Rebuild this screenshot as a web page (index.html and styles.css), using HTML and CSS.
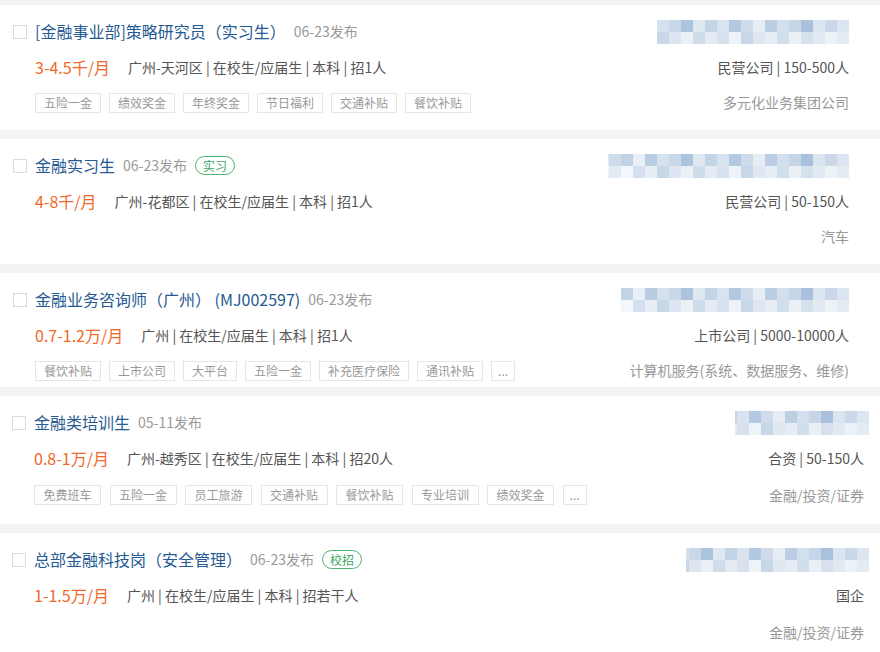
FILE: index.html
```html
<!DOCTYPE html>
<html lang="zh-CN">
<head>
    <meta charset="UTF-8">
    <meta name="viewport" content="width=device-width, initial-scale=1.0">
    <title>职位列表</title>
    <link rel="stylesheet" href="styles.css">
</head>
<body>
    <div class="job-list">
        <div class="job">
            <span class="job__check"></span>
            <div class="job__main">
                <div class="job__head">
                    <a class="job__title" href="#">[金融事业部]策略研究员（实习生）</a>
                    <span class="job__date">06-23发布</span>
                </div>
                <div class="job__info">
                    <span class="job__salary">3-4.5千/月</span>
                    <span class="job__meta">广州-天河区 | 在校生/应届生 | 本科 | 招1人</span>
                </div>
                <div class="job__tags">
                    <span class="tag">五险一金</span>
                    <span class="tag">绩效奖金</span>
                    <span class="tag">年终奖金</span>
                    <span class="tag">节日福利</span>
                    <span class="tag">交通补贴</span>
                    <span class="tag">餐饮补贴</span>
                </div>
            </div>
            <div class="job__side">
                <div class="blur blur--w192"></div>
                <div class="job__type">民营公司 | 150-500人</div>
                <div class="job__industry">多元化业务集团公司</div>
            </div>
        </div>

        <div class="job">
            <span class="job__check"></span>
            <div class="job__main">
                <div class="job__head">
                    <a class="job__title" href="#">金融实习生</a>
                    <span class="job__date">06-23发布</span>
                    <span class="badge">实习</span>
                </div>
                <div class="job__info">
                    <span class="job__salary">4-8千/月</span>
                    <span class="job__meta">广州-花都区 | 在校生/应届生 | 本科 | 招1人</span>
                </div>
            </div>
            <div class="job__side">
                <div class="blur blur--w241"></div>
                <div class="job__type">民营公司 | 50-150人</div>
                <div class="job__industry">汽车</div>
            </div>
        </div>

        <div class="job job--short">
            <span class="job__check"></span>
            <div class="job__main">
                <div class="job__head">
                    <a class="job__title" href="#">金融业务咨询师（广州） (MJ002597)</a>
                    <span class="job__date">06-23发布</span>
                </div>
                <div class="job__info">
                    <span class="job__salary">0.7-1.2万/月</span>
                    <span class="job__meta">广州 | 在校生/应届生 | 本科 | 招1人</span>
                </div>
                <div class="job__tags">
                    <span class="tag">餐饮补贴</span>
                    <span class="tag">上市公司</span>
                    <span class="tag">大平台</span>
                    <span class="tag">五险一金</span>
                    <span class="tag">补充医疗保险</span>
                    <span class="tag">通讯补贴</span>
                    <span class="tag tag--more">...</span>
                </div>
            </div>
            <div class="job__side">
                <div class="blur blur--w228"></div>
                <div class="job__type">上市公司 | 5000-10000人</div>
                <div class="job__industry">计算机服务(系统、数据服务、维修)</div>
            </div>
        </div>

        <div class="job job--wide">
            <span class="job__check"></span>
            <div class="job__main">
                <div class="job__head">
                    <a class="job__title" href="#">金融类培训生</a>
                    <span class="job__date">05-11发布</span>
                </div>
                <div class="job__info">
                    <span class="job__salary">0.8-1万/月</span>
                    <span class="job__meta">广州-越秀区 | 在校生/应届生 | 本科 | 招20人</span>
                </div>
                <div class="job__tags">
                    <span class="tag">免费班车</span>
                    <span class="tag">五险一金</span>
                    <span class="tag">员工旅游</span>
                    <span class="tag">交通补贴</span>
                    <span class="tag">餐饮补贴</span>
                    <span class="tag">专业培训</span>
                    <span class="tag">绩效奖金</span>
                    <span class="tag tag--more">...</span>
                </div>
            </div>
            <div class="job__side">
                <div class="blur blur--w134"></div>
                <div class="job__type">合资 | 50-150人</div>
                <div class="job__industry">金融/投资/证券</div>
            </div>
        </div>

        <div class="job job--wide">
            <span class="job__check"></span>
            <div class="job__main">
                <div class="job__head">
                    <a class="job__title" href="#">总部金融科技岗（安全管理）</a>
                    <span class="job__date">06-23发布</span>
                    <span class="badge">校招</span>
                </div>
                <div class="job__info">
                    <span class="job__salary">1-1.5万/月</span>
                    <span class="job__meta">广州 | 在校生/应届生 | 本科 | 招若干人</span>
                </div>
            </div>
            <div class="job__side">
                <div class="blur blur--w183"></div>
                <div class="job__type">国企</div>
                <div class="job__industry">金融/投资/证券</div>
            </div>
        </div>
    </div>
</body>
</html>
```

FILE: styles.css
```css
body {
    margin: 0;
    background-color: #f3f3f3;
    font-family: "Noto Sans CJK SC", "Liberation Sans", sans-serif;
}

.job-list {
    padding-top: 5px;
}

.job {
    display: flex;
    box-sizing: border-box;
    height: 125px;
    padding: 14px 31px 0 13px;
    background-color: #fff;
}

.job + .job {
    margin-top: 9px;
}

.job--short {
    height: 114px;
}

.job--wide {
    height: 128px;
    padding: 14px 16px 0 12px;
}

.job--wide .job__tags,
.job--wide .job__industry {
    margin-top: 15px;
}

.job--wide .job__tags {
    gap: 8.5px;
}

.job--wide .tag {
    padding: 0 8.5px;
}

.job--wide .tag--more {
    padding: 0 6px;
}

.job--wide .blur {
    margin-right: -5px;
}

.job__check {
    flex: none;
    width: 14px;
    height: 14px;
    box-sizing: border-box;
    margin: 6px 8px 0 0;
    border: 1px solid #dcdcdc;
    background-color: #fff;
}

.job__main {
    flex: 1;
    min-width: 0;
}

.job__head {
    display: flex;
    align-items: center;
    height: 24px;
    white-space: nowrap;
}

.job__title {
    font-size: 16px;
    color: #265a93;
    text-decoration: none;
}

.job__date {
    margin-left: 8px;
    font-size: 14px;
    color: #999;
}

.badge {
    margin-left: 8px;
    height: 19px;
    box-sizing: border-box;
    padding: 0 7px;
    border: 1px solid #4bb56e;
    border-radius: 10px;
    line-height: 17px;
    font-size: 12px;
    color: #3aa65f;
}

.job__info {
    display: flex;
    align-items: center;
    height: 24px;
    margin-top: 12px;
    white-space: nowrap;
}

.job__salary {
    margin-right: 18px;
    font-size: 16px;
    color: #f0692a;
}

.job__meta {
    font-size: 14px;
    color: #555;
}

.job__tags {
    display: flex;
    gap: 8px;
    margin-top: 14px;
}

.tag {
    height: 20px;
    box-sizing: border-box;
    padding: 0 8px;
    border: 1px solid #e6e6e6;
    line-height: 18px;
    font-size: 12px;
    color: #999;
    white-space: nowrap;
}

.tag--more {
    padding: 0 6px;
}

.job__side {
    flex: none;
    display: flex;
    flex-direction: column;
    align-items: flex-end;
    white-space: nowrap;
}

/* company name is pixelated in the source */
.blur {
    height: 24px;
    margin-top: 1px;
    background-image:
        linear-gradient(90deg,
            #e4ebf3 0 12px, #d0dcea 12px 24px, #c2d3e6 24px 36px, #e9eff6 36px 48px,
            #b8cce2 48px 60px, #d6e1ee 60px 72px, #c9d8e9 72px 84px, #adc4de 84px 96px,
            #dfe7f1 96px 108px, #c4d4e7 108px 120px, #d9e3ef 120px 132px, #b3c9e1 132px 144px,
            #cfdbea 144px 156px, #e6edf5 156px 168px, #bccee3 168px 180px, #d3dfec 180px 192px,
            #c6d6e8 192px 204px, #a9c1dc 204px 216px, #dbe5f0 216px 228px, #cad8e9 228px 240px,
            #dde6f0 240px 252px),
        linear-gradient(90deg,
            #eef2f8 0 12px, #e2eaf3 12px 24px, #f3f6fa 24px 36px, #d4e0ed 36px 48px,
            #e8eef5 48px 60px, #c9d8e9 60px 72px, #dde6f0 72px 84px, #eaf0f6 84px 96px,
            #cfdcea 96px 108px, #e4ebf3 108px 120px, #d8e2ee 120px 132px, #eef3f8 132px 144px,
            #c8d7e8 144px 156px, #dfe7f1 156px 168px, #e6edf4 168px 180px, #d1deeb 180px 192px,
            #ebf0f6 192px 204px, #d6e1ed 204px 216px, #e1e9f2 216px 228px, #edf2f7 228px 240px,
            #e4ebf3 240px 252px);
    background-size: 252px 12px, 252px 12px;
    background-position: right top, right bottom;
    background-repeat: no-repeat;
    filter: blur(0.5px);
}

.blur--w134 { width: 134px; }
.blur--w183 { width: 183px; }
.blur--w192 { width: 192px; }
.blur--w228 { width: 228px; }
.blur--w241 { width: 241px; }

.job__type {
    height: 24px;
    margin-top: 11px;
    line-height: 24px;
    font-size: 14px;
    color: #555;
}

.job__industry {
    height: 20px;
    margin-top: 13px;
    line-height: 20px;
    font-size: 14px;
    color: #999;
}
```
